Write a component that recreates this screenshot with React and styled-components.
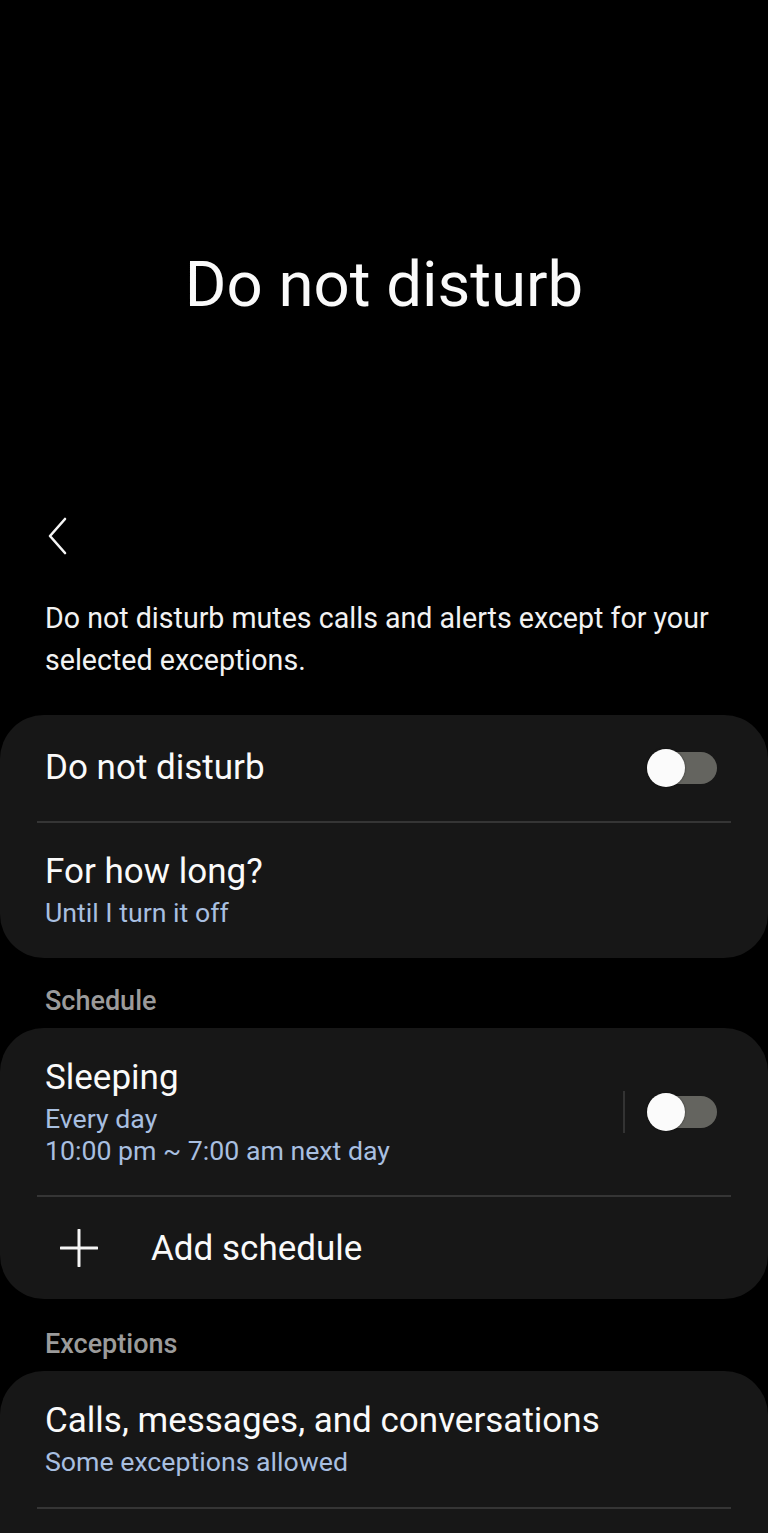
import styled, { createGlobalStyle } from "styled-components";

const Global = createGlobalStyle`
  body {
    margin: 0;
    background: #000;
    font-family: Roboto, "Noto Sans", sans-serif;
    color: #fafafa;
  }
`;

const Page = styled.div`
  width: 768px;
  height: 1533px;
  background: #000;
  overflow: hidden;
`;

const Header = styled.h1`
  margin: 0;
  padding: 245px 0 175px;
  text-align: center;
  font-size: 63.5px;
  line-height: 80px;
  font-weight: 400;
`;

const NavRow = styled.div`
  height: 75px;
  display: flex;
  align-items: center;
  padding-left: 46px;
  margin-top: -2px;
`;

const Intro = styled.p`
  margin: 24px 0 34px;
  padding: 0 45px;
  font-size: 28.6px;
  line-height: 42px;
  color: #f2f2f2;
`;

const Card = styled.div`
  background: #171717;
  border-radius: 44px;
  overflow: hidden;
`;

const Row = styled.div`
  display: flex;
  align-items: center;
  min-height: ${(p) => p.$h || 0}px;
  padding: ${(p) => p.$pad || 0}px 51px ${(p) => p.$padB || 0}px ${(p) => p.$left || 45}px;
  box-sizing: border-box;
`;

const Texts = styled.div`
  flex: 1;
  display: flex;
  flex-direction: column;
`;

const Title = styled.div`
  font-size: 35px;
  line-height: 42px;
  color: #fafafa;
`;

const Subs = styled.div`
  margin-top: 4px;
  font-size: 26.7px;
  line-height: 32px;
  color: #a8bfe0;
`;

const Divider = styled.div`
  height: 2px;
  background: #353535;
  margin: 0 37px;
`;

const Section = styled.div`
  margin: ${(p) => p.$top || 28}px 0 12px;
  padding-left: 45px;
  font-size: 27px;
  line-height: 30px;
  font-weight: 500;
  color: #9b9b9b;
`;

const VLine = styled.div`
  width: 2px;
  height: 42px;
  background: #333;
  margin-right: 22px;
`;

const Track = styled.div`
  position: relative;
  width: 70px;
  height: 32px;
  border-radius: 16px;
  background: #64645f;
`;

const Thumb = styled.div`
  position: absolute;
  left: 0;
  top: -3px;
  width: 38px;
  height: 38px;
  border-radius: 50%;
  background: #fbfbfb;
  box-shadow: 0 0 2px rgba(0, 0, 0, 0.6);
`;

const PlusIcon = styled.svg`
  flex: none;
  margin-right: 53px;
`;

const AddLabel = styled.div`
  font-size: 35px;
  color: #fafafa;
`;

const Toggle = () => (
  <Track>
    <Thumb />
  </Track>
);

export default function App() {
  return (
    <Page>
      <Global />
      <Header>Do not disturb</Header>
      <NavRow>
        <svg width="24" height="38" viewBox="0 0 24 38">
          <path d="M19 2 L4 19 L19 36" fill="none" stroke="#f5f5f5" strokeWidth="2.6" strokeLinecap="round" strokeLinejoin="round" />
        </svg>
      </NavRow>
      <Intro>Do not disturb mutes calls and alerts except for your selected exceptions.</Intro>

      <Card>
        <Row $h={106}>
          <Texts>
            <Title>Do not disturb</Title>
          </Texts>
          <Toggle />
        </Row>
        <Divider />
        <Row $pad={28} $padB={29}>
          <Texts>
            <Title>For how long?</Title>
            <Subs>Until I turn it off</Subs>
          </Texts>
        </Row>
      </Card>

      <Section>Schedule</Section>
      <Card>
        <Row $pad={29} $padB={28}>
          <Texts>
            <Title>Sleeping</Title>
            <Subs>
              Every day
              <br />
              10:00 pm ~ 7:00 am next day
            </Subs>
          </Texts>
          <VLine />
          <Toggle />
        </Row>
        <Divider />
        <Row $h={102} $left={60}>
          <PlusIcon width="38" height="38" viewBox="0 0 38 38">
            <path d="M19 1 V37 M1 19 H37" stroke="#f5f5f5" strokeWidth="3" strokeLinecap="round" />
          </PlusIcon>
          <AddLabel>Add schedule</AddLabel>
        </Row>
      </Card>

      <Section $top={30}>Exceptions</Section>
      <Card>
        <Row $pad={29} $padB={29}>
          <Texts>
            <Title>Calls, messages, and conversations</Title>
            <Subs>Some exceptions allowed</Subs>
          </Texts>
        </Row>
        <Divider />
        <Row $h={110} />
      </Card>
    </Page>
  );
}
